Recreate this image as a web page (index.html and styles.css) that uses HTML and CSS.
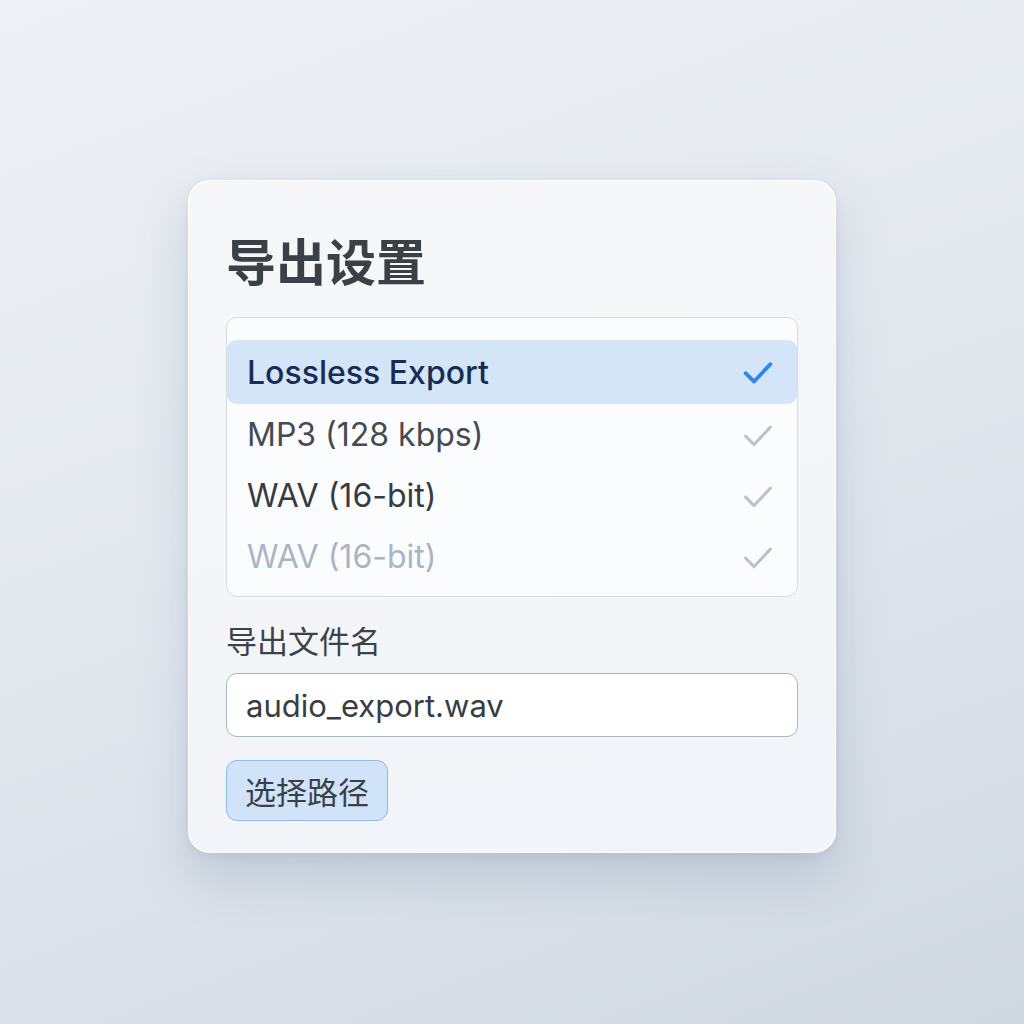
FILE: index.html
```html
<!DOCTYPE html>
<html lang="zh">
<head>
<meta charset="utf-8">
<title>导出设置</title>
<link rel="stylesheet" href="styles.css">
</head>
<body>
<div class="card">
  <h1 class="title">导出设置</h1>
  <div class="list">
    <div class="row selected">
      <span>Lossless Export</span>
      <svg class="check" viewBox="0 0 32 32"><path d="M5 17 L12.5 24.5 L27 9"/></svg>
    </div>
    <div class="row r-mp3">
      <span>MP3 (128 kbps)</span>
      <svg class="check" viewBox="0 0 32 32"><path d="M5 17 L12.5 24.5 L27 9"/></svg>
    </div>
    <div class="row r-wav">
      <span>WAV (16-bit)</span>
      <svg class="check" viewBox="0 0 32 32"><path d="M5 17 L12.5 24.5 L27 9"/></svg>
    </div>
    <div class="row r-faded">
      <span>WAV (16-bit)</span>
      <svg class="check" viewBox="0 0 32 32"><path d="M5 17 L12.5 24.5 L27 9"/></svg>
    </div>
  </div>
  <div class="label">导出文件名</div>
  <div class="input">audio_export.wav</div>
  <div class="btn-row"><div class="btn">选择路径</div></div>
</div>
</body>
</html>
```
FILE: styles.css
```css
* { box-sizing: border-box; }
html, body { margin: 0; padding: 0; }
body {
  width: 1024px;
  height: 1024px;
  overflow: hidden;
  background: linear-gradient(160deg, #edf0f4 0%, #e4e9ef 45%, #d0d8e2 100%);
  font-family: Inter, "Noto Sans CJK SC", sans-serif;
  display: flex;
  justify-content: center;
  align-items: flex-start;
  padding-top: 180px;
}
.card {
  width: 648px;
  background: linear-gradient(170deg, #f6f7f9 0%, #f1f4f8 100%);
  border-radius: 22px;
  padding: 49px 38px 32px;
  box-shadow: 0 24px 50px rgba(105, 125, 155, 0.25), 0 3px 8px rgba(120, 135, 160, 0.14), inset 0 0 0 1px rgba(255,255,255,0.7);
}
.title {
  margin: 0;
  font-family: "Noto Sans CJK SC", sans-serif;
  font-size: 50px;
  font-weight: 700;
  line-height: 60px;
  color: #3a4046;
}
.list {
  margin-top: 28px;
  background: #fbfcfd;
  border: 1px solid #d9dee5;
  border-radius: 11px;
  padding: 22px 0 9px;
}
.row {
  display: flex;
  align-items: center;
  justify-content: space-between;
  height: 61px;
  padding: 0 21px 0 20px;
  font-size: 32px;
  color: #464b51;
}
.row.selected {
  height: 64px;
  background: #d5e5f8;
  border-radius: 9px;
  color: #172d55;
  font-weight: 500;
}
.row.r-wav { color: #363b41; }
.row.r-faded { color: #aab5c3; }
.check {
  width: 36px;
  height: 36px;
  fill: none;
  stroke: #b9c3cf;
  stroke-width: 2.7;
  stroke-linecap: round;
  stroke-linejoin: round;
}
.selected .check { stroke: #2f86e8; stroke-width: 3.3; }
.label {
  margin-top: 24px;
  font-family: "Noto Sans CJK SC", sans-serif;
  font-size: 31px;
  line-height: 38px;
  color: #3d4248;
}
.input {
  margin-top: 14px;
  height: 64px;
  background: #ffffff;
  border: 1.5px solid #adb5c0;
  border-radius: 11px;
  padding: 0 19px;
  display: flex;
  align-items: center;
  font-size: 31px;
  color: #383d43;
}
.btn-row { margin-top: 23px; display: flex; }
.btn {
  height: 61px;
  padding: 0 18px;
  display: flex;
  align-items: center;
  background: #d0e3f8;
  border: 1.5px solid #8dbbea;
  border-radius: 11px;
  font-family: "Noto Sans CJK SC", sans-serif;
  font-size: 31px;
  color: #3a4048;
}
```
